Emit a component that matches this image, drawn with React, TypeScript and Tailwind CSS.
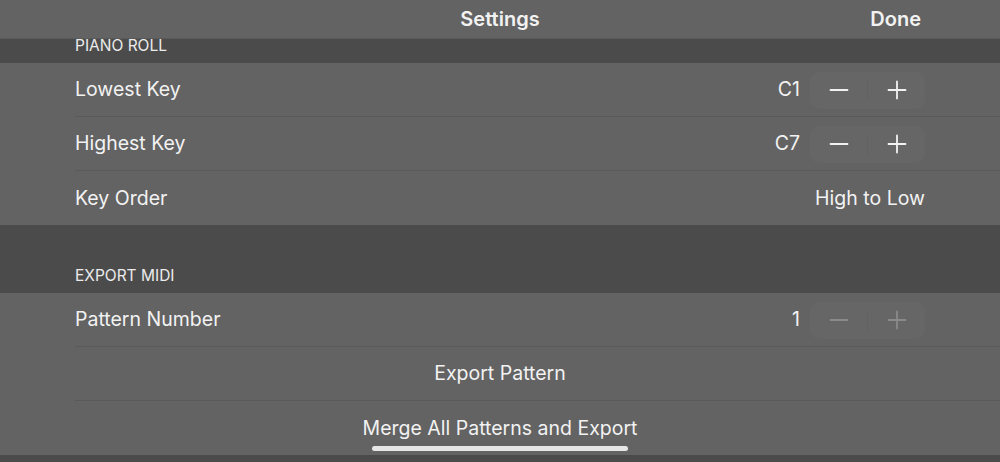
import React from 'react';

type Row = {
    label: string;
    value?: string;
    stepper?: boolean;
    disabled?: boolean;
};

const pianoRows: Row[] = [
    { label: 'Lowest Key', value: 'C1', stepper: true },
    { label: 'Highest Key', value: 'C7', stepper: true },
    { label: 'Key Order', value: 'High to Low' },
];

function Stepper({ disabled }: { disabled?: boolean }) {
    const tone = disabled ? 'text-[#8a8a8a]' : 'text-[#f2f2f2]';
    return (
        <div className="ml-[10px] flex h-[37px] w-[115px] items-center rounded-[9px] bg-[#666666]">
            <div className={`flex h-full flex-1 items-center justify-center ${tone}`}>
                <svg width="20" height="20" viewBox="0 0 20 20">
                    <path d="M1.5 10h17" stroke="currentColor" strokeWidth="1.8" strokeLinecap="round" />
                </svg>
            </div>
            <div className="h-[19px] w-px bg-[#616161]" />
            <div className={`flex h-full flex-1 items-center justify-center ${tone}`}>
                <svg width="20" height="20" viewBox="0 0 20 20">
                    <path d="M1.5 10h17M10 1.5v17" stroke="currentColor" strokeWidth="1.8" strokeLinecap="round" />
                </svg>
            </div>
        </div>
    );
}

function SettingRow({ row, last }: { row: Row; last?: boolean }) {
    return (
        <div className="pl-[75px]">
            <div className={`flex h-[54px] items-center pt-[1px] pr-[75px] ${last ? '' : 'border-b border-[#5a5a5a]'}`}>
                <span className="flex-1 text-[19.5px] text-[#f2f2f2]">{row.label}</span>
                {row.value && <span className="text-[19.5px] text-[#f2f2f2]">{row.value}</span>}
                {row.stepper && <Stepper disabled={row.disabled} />}
            </div>
        </div>
    );
}

export default function App() {
    return (
        <div
            className="relative h-[462px] w-[1000px] overflow-hidden bg-[#4b4b4b] text-[#f2f2f2]"
            style={{ fontFamily: 'Inter, "Liberation Sans", sans-serif' }}
        >
            {/* nav bar */}
            <div className="relative flex h-[39px] items-center justify-center border-b border-[#5a5a5a] bg-[#636363]">
                <span className="text-[20px] font-semibold">Settings</span>
                <span className="absolute right-[79px] text-[20px] font-semibold">Done</span>
            </div>

            <div className="flex h-[24px] items-start pl-[75px]">
                <span className="-mt-[1px] text-[15.5px] leading-[16px] text-[#ececec]">PIANO ROLL</span>
            </div>

            <div className="bg-[#636363]">
                {pianoRows.map((row, i) => (
                    <SettingRow key={row.label} row={row} last={i === pianoRows.length - 1} />
                ))}
            </div>

            <div className="flex h-[68px] items-end pb-[9px] pl-[75px]">
                <span className="text-[15.5px] leading-[16px] text-[#ececec]">EXPORT MIDI</span>
            </div>

            <div className="bg-[#636363]">
                <SettingRow row={{ label: 'Pattern Number', value: '1', stepper: true, disabled: true }} />
                <div className="pl-[75px]">
                    <div className="flex h-[54px] items-center justify-center border-b border-[#5a5a5a] pt-[1px] pr-[75px] text-[19.5px]">
                        <span className="-ml-[75px] pl-[75px]">Export Pattern</span>
                    </div>
                </div>
                <div className="flex h-[54px] items-center justify-center pt-[1px] text-[19.5px]">
                    Merge All Patterns and Export
                </div>
            </div>

            {/* home indicator */}
            <div className="absolute left-[372px] top-[446px] h-[5px] w-[256px] rounded-full bg-[#e6e6e6]" />
        </div>
    );
}
